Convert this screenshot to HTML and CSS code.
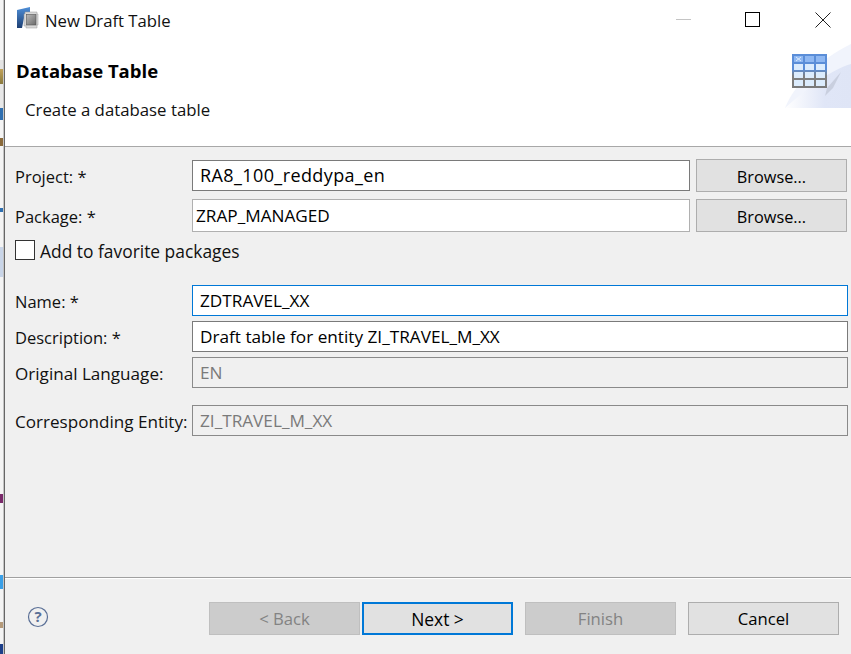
FILE: index.html
```html
<!DOCTYPE html>
<html lang="en">
<head>
  <meta charset="UTF-8" />
  <title>New Draft Table</title>
  <link rel="stylesheet" href="styles.css">
</head>
<body>
  <div class="backdrop"></div>

  <div class="dialog">
    <!-- Title bar -->
    <div class="titlebar">
      <svg class="app-icon" width="22" height="22" viewBox="0 0 22 22">
        <defs>
          <linearGradient id="folder" x1="0" y1="0" x2="0" y2="1">
            <stop offset="0" stop-color="#4f8fd8" />
            <stop offset="1" stop-color="#1d3f73" />
          </linearGradient>
          <linearGradient id="chip" x1="0" y1="0" x2="1" y2="1">
            <stop offset="0" stop-color="#b8b8b8" />
            <stop offset="1" stop-color="#6a6a6a" />
          </linearGradient>
        </defs>
        <path d="M0 3 L13 0 L13 5 L8 6 L5 21 L0 21 Z" fill="url(#folder)" />
        <path d="M8 5 H20 V7 H21 V18 H20 V21 H9 V19 H7 V7 H8 Z" fill="#d8d8d8" stroke="#9a9a9a" stroke-width="0.5" />
        <rect x="9.5" y="7.5" width="9.5" height="10.5" fill="url(#chip)" stroke="#555" stroke-width="0.6" />
      </svg>
      <span class="title">New Draft Table</span>
      <div class="win-buttons">
        <svg width="16" height="16" viewBox="0 0 16 16"><path d="M1 7.5 H16" stroke="#c4c4c4" fill="none" /></svg>
        <svg width="16" height="16" viewBox="0 0 16 16"><rect x="0.5" y="0.5" width="14" height="14" stroke="#000" fill="none" /></svg>
        <svg width="16" height="16" viewBox="0 0 16 16"><path d="M0.5 0.5 L15.5 15.5 M15.5 0.5 L0.5 15.5" stroke="#222" fill="none" /></svg>
      </div>
    </div>

    <!-- Header -->
    <div class="header">
      <h1>Database Table</h1>
      <p>Create a database table</p>
      <svg class="banner" width="66" height="66" viewBox="0 0 66 66">
        <defs>
          <linearGradient id="wash" x1="0" y1="0" x2="1" y2="0">
            <stop offset="0" stop-color="#fff" />
            <stop offset="0.6" stop-color="#e0e6f7" />
            <stop offset="1" stop-color="#dfe5f6" />
          </linearGradient>
          <linearGradient id="grid" x1="0" y1="0" x2="0" y2="1">
            <stop offset="0" stop-color="#5b8ed8" />
            <stop offset="0.45" stop-color="#5b8ed8" />
            <stop offset="0.65" stop-color="#7f7f7f" />
            <stop offset="1" stop-color="#7a7a7a" />
          </linearGradient>
        </defs>
        <path d="M0 66 C10 40 40 14 66 2 V66 Z" fill="#f1f4fc" />
        <path d="M0 66 C18 50 44 28 66 22 V66 Z" fill="url(#wash)" />
        <path d="M42 46 L56 30 L48 46 L40 54 Z" fill="#c9cfdf" />
        <g transform="translate(7 12)">
          <rect width="35" height="34" fill="url(#grid)" />
          <g fill="#8fb8f2">
            <rect x="2" y="2" width="9" height="6" /><rect x="13" y="2" width="9" height="6" /><rect x="24" y="2" width="9" height="6" />
          </g>
          <g fill="#dcecfd">
            <rect x="2" y="10" width="9" height="6" /><rect x="13" y="10" width="9" height="6" /><rect x="24" y="10" width="9" height="6" />
            <rect x="2" y="18" width="9" height="6" /><rect x="13" y="18" width="9" height="6" /><rect x="24" y="18" width="9" height="6" />
            <rect x="2" y="26" width="9" height="6" /><rect x="13" y="26" width="9" height="6" /><rect x="24" y="26" width="9" height="6" />
          </g>
          <path d="M4 3 L9 7 M9 3 L4 7" stroke="#dcecfd" />
        </g>
      </svg>
    </div>

    <!-- Form -->
    <div class="body">
      <div class="row">
        <label>Project: *</label>
        <div class="field strong wide-text">RA8_100_reddypa_en</div>
        <button class="btn browse">Browse...</button>
      </div>
      <div class="row row-package">
        <label>Package: *</label>
        <div class="field light">ZRAP_MANAGED</div>
        <button class="btn browse">Browse...</button>
      </div>
      <div class="check-row">
        <span class="checkbox"></span>
        <span class="check-text">Add to favorite packages</span>
      </div>

      <div class="row row-name">
        <label>Name: *</label>
        <div class="field focus">ZDTRAVEL_XX</div>
      </div>
      <div class="row row-tight">
        <label>Description: *</label>
        <div class="field strong">Draft table for entity ZI_TRAVEL_M_XX</div>
      </div>
      <div class="row row-tight">
        <label class="long">Original Language:</label>
        <div class="field disabled">EN</div>
      </div>
      <div class="row row-entity">
        <label class="long">Corresponding Entity:</label>
        <div class="field disabled">ZI_TRAVEL_M_XX</div>
      </div>
    </div>

    <!-- Footer -->
    <div class="footer">
      <svg class="help" width="22" height="22" viewBox="0 0 22 22">
        <circle cx="11" cy="11" r="9.5" fill="none" stroke="#5a6f96" stroke-width="1.2" />
        <text x="11" y="16" text-anchor="middle" class="help-mark">?</text>
      </svg>
      <div class="actions">
        <button class="btn off">&lt; Back</button>
        <button class="btn default">Next &gt;</button>
        <button class="btn off finish">Finish</button>
        <button class="btn cancel">Cancel</button>
      </div>
    </div>
  </div>
</body>
</html>
```

FILE: styles.css
```css
html, body {
  height: 100%;
}

body {
  margin: 0;
  display: flex;
  height: 654px;
  overflow: hidden;
  font-family: "Open Sans", "Noto Sans", sans-serif;
  font-size: 16.7px;
  color: #111;
  background: #fff;
}

/* sliver of the window behind the dialog */
.backdrop {
  width: 3px;
  flex-shrink: 0;
  border-right: 1px solid #c4c4c4;
  background: linear-gradient(to bottom,
    #f4f4f4 0, #f4f4f4 60px,
    #e4e4e4 60px, #e4e4e4 69px,
    #c2a35a 69px, #8a7a3e 84px,
    #e8e8e8 84px, #e8e8e8 108px,
    #2f6fb0 108px, #2f6fb0 120px,
    #f4f4f4 120px, #f4f4f4 138px,
    #8a6a3a 138px, #8a6a3a 146px,
    #f4f4f4 146px, #f4f4f4 208px,
    #2f6fb0 208px, #2f6fb0 212px,
    #f4f4f4 212px, #f4f4f4 247px,
    #c9d5e8 247px, #c9d5e8 277px,
    #f4f4f4 277px, #f4f4f4 494px,
    #7a2a6a 494px, #7a2a6a 503px,
    #f4f4f4 503px, #f4f4f4 575px,
    #3aa0e8 575px, #3aa0e8 589px,
    #f4f4f4 589px, #f4f4f4 622px,
    #b59a7a 622px, #b59a7a 628px,
    #f4f4f4 628px, #f4f4f4 644px,
    #1d3f8a 644px, #1d3f8a 654px);
}

.dialog {
  flex-grow: 1;
  display: flex;
  flex-direction: column;
  border-left: 1px solid #666;
  background: #f0f0f0;
}

.titlebar {
  height: 42px;
  flex-shrink: 0;
  display: flex;
  align-items: center;
  background: #fff;
  padding-left: 12px;
}

.app-icon {
  margin: -6px 6px 0 0;
}

.title {
  flex-grow: 1;
  margin-top: -2px;
}

.win-buttons {
  display: flex;
  gap: 54px;
  margin: -2px 20px 0 0;
}

.header {
  height: 104px;
  flex-shrink: 0;
  position: relative;
  background: #fff;
  border-bottom: 1px solid #a8a8a8;
}

.header h1 {
  margin: 0;
  padding: 17px 0 0 11px;
  font-size: 18.5px;
  line-height: 24px;
  font-weight: 700;
  color: #000;
}

.header p {
  margin: 0;
  padding: 16px 0 0 20px;
  font-size: 16.8px;
  line-height: 22px;
}

.banner {
  position: absolute;
  top: 0;
  right: 0;
}

.body {
  flex-grow: 1;
  padding: 12px 3px 0 10px;
}

.row {
  display: flex;
  align-items: center;
  height: 33px;
}

.row label {
  width: 177px;
  flex-shrink: 0;
  padding-top: 1px;
  font-size: 16.5px;
}

.row label.long {
  font-size: 17.1px;
}

.row-package {
  margin-top: 7px;
}

.row-name {
  margin-top: 24px;
}

.row-tight {
  margin-top: 3px;
}

.row-entity {
  margin-top: 15px;
}

.field {
  flex-grow: 1;
  height: 31px;
  box-sizing: border-box;
  padding-left: 7px;
  font-size: 17.2px;
  line-height: 29px;
  background: #fff;
  border: 1px solid #7a7a7a;
  color: #000;
}

.wide-text {
  font-size: 18px;
  letter-spacing: 0.4px;
}

.field.light {
  height: 33px;
  line-height: 31px;
  border-color: #b0b0b0;
  padding-left: 3px;
}

.field.focus {
  border-color: #0078d7;
}

.field.disabled {
  background: #f0f0f0;
  border-color: #8a8a8a;
  color: #7a7a7a;
}

.btn {
  font: inherit;
  height: 33px;
  width: 151px;
  padding: 0;
  background: #e1e1e1;
  border: 1px solid #adadad;
  color: #000;
}

.browse {
  margin: 0 1px 0 6px;
  padding-top: 2px;
  flex-shrink: 0;
  font-size: 16.3px;
}

.check-row {
  display: flex;
  align-items: center;
  margin-top: 8px;
  height: 20px;
  font-size: 17.4px;
}

.check-text {
  padding-top: 2px;
}

.checkbox {
  width: 18px;
  height: 18px;
  margin-right: 5px;
  border: 1px solid #333;
  background: #fff;
}

.footer {
  height: 77px;
  flex-shrink: 0;
  display: flex;
  border-top: 1px solid #a0a0a0;
  box-shadow: inset 0 1px 0 #fff;
  padding-top: 24px;
  box-sizing: border-box;
}

.help {
  margin: 4px 0 0 22px;
}

.help-mark {
  font-size: 15px;
  font-weight: 700;
  fill: #5a6f96;
}

.actions {
  display: flex;
  gap: 2px;
  margin-left: 160px;
}

.btn.off {
  background: #ccc;
  border-color: #bfbfbf;
  color: #838383;
}

.btn.default {
  border: 2px solid #0078d7;
  font-size: 17.4px;
}

.finish {
  margin-left: 10px;
}

.cancel {
  margin-left: 10px;
}
```
